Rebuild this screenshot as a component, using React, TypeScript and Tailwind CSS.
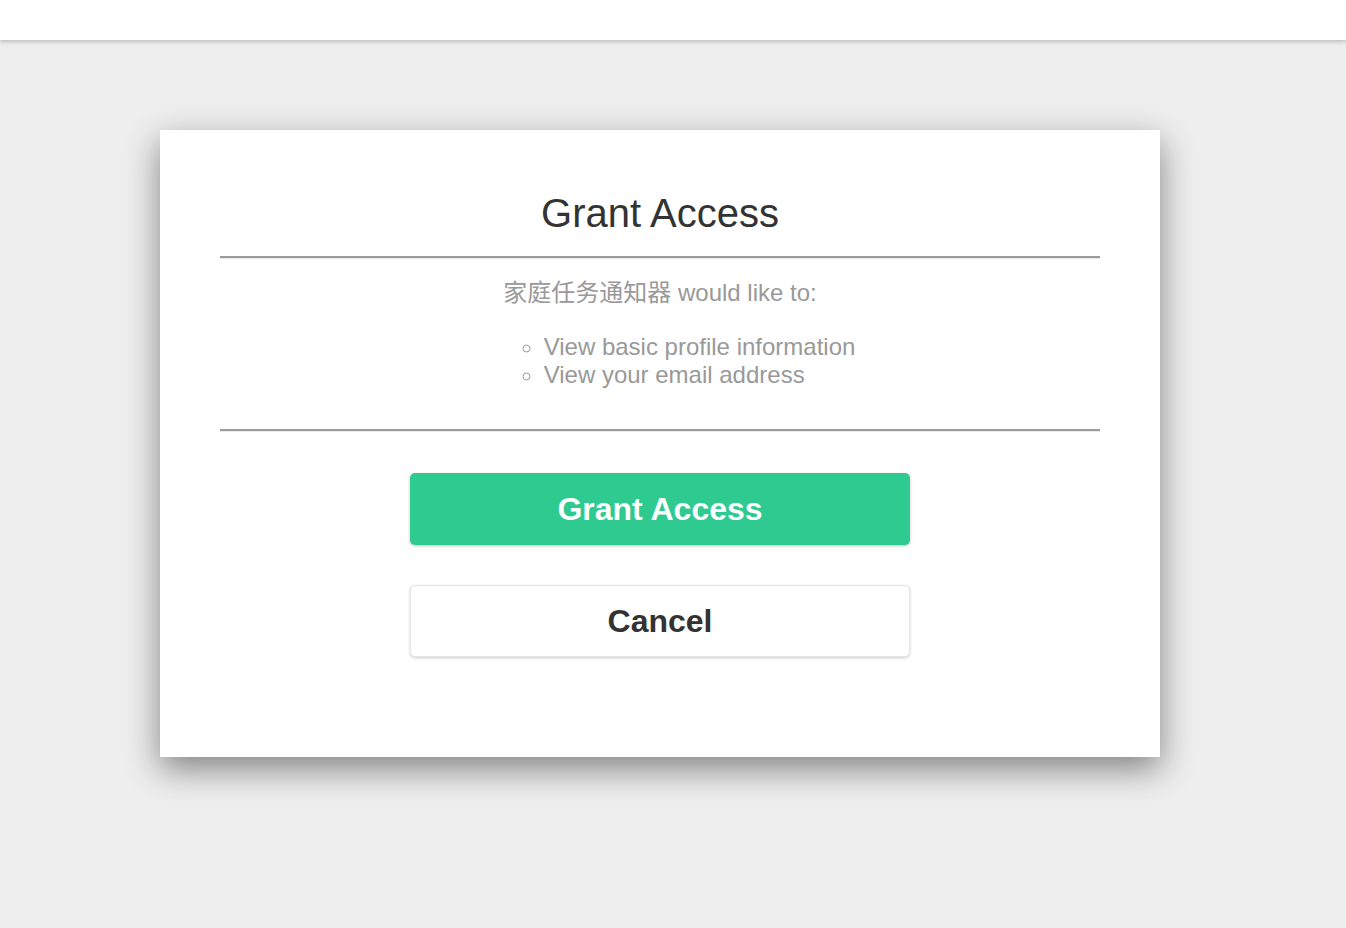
const scopes = ["View basic profile information", "View your email address"];

// Inset-style rule like the browser default <hr>
const Rule = ({ className = "" }: { className?: string }) => (
  <div className={`border-t-2 border-b border-t-[#9b9b9b] border-b-[#ececec] ${className}`} />
);

export default function App() {
  return (
    <div
      className="min-h-[928px] bg-[#eeeeee] text-[#333333]"
      style={{ fontFamily: '"Liberation Sans", Arial, "Noto Sans CJK SC", sans-serif' }}
    >
      {/* top bar */}
      <div className="h-10 bg-white shadow-[0_2px_4px_rgba(0,0,0,0.2)]" />

      <div className="flex pl-[160px] pt-[90px]">
        <div className="w-[1000px] bg-white px-[60px] pt-[59px] pb-[100px] shadow-[0_12px_32px_rgba(0,0,0,0.45)]">
          <h1 className="text-center text-[40px] leading-[48px] text-[#333333]">Grant Access</h1>

          <Rule className="mt-[19px]" />

          <p className="mt-[20px] text-center text-[24px] leading-[28px] text-[#999999]">
            家庭任务通知器 would like to:
          </p>

          <div className="mt-[26px] flex justify-center">
            <ul className="ml-[39px] list-[circle] pl-10 text-[24px] leading-[28px] text-[#999999]">
              {scopes.map((s) => (
                <li key={s}>{s}</li>
              ))}
            </ul>
          </div>

          <Rule className="mt-[40px]" />

          <div className="mt-[41px] flex flex-col items-center gap-10">
            <button className="h-[72px] w-[500px] rounded-[5px] bg-[#2eca8f] text-[32px] font-bold text-white shadow-[0_1px_3px_rgba(0,0,0,0.25)]">
              Grant Access
            </button>
            <button className="h-[72px] w-[500px] rounded-[5px] border border-[#e6e6e6] bg-white text-[32px] font-bold text-[#333333] shadow-[0_1px_3px_rgba(0,0,0,0.2)]">
              Cancel
            </button>
          </div>
        </div>
      </div>
    </div>
  );
}
